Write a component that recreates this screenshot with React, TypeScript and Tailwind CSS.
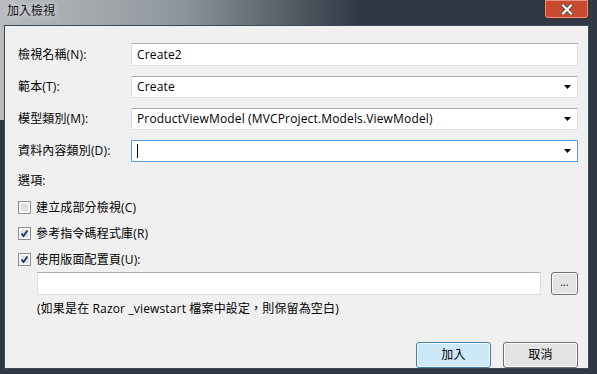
import React from 'react';

function Arrow() {
  return (
    <svg width="7" height="4" viewBox="0 0 7 4" className="absolute right-[6px] top-1/2 -translate-y-1/2">
      <path d="M0 0H7L3.5 4Z" fill="#000" />
    </svg>
  );
}

function Check({ checked }: { checked: boolean }) {
  return (
    <span className="relative w-[13px] h-[13px] border border-[#8e8f8f] bg-[#f4f4f4] shrink-0">
      <span className="absolute inset-[2px] bg-[#dcdee2]" />
      {checked && (
        <svg width="11" height="11" viewBox="0 0 11 11" className="absolute left-0 top-0">
          <path d="M2.5 5.5L4.5 8L8.5 2.5" stroke="#21346f" strokeWidth="1.8" fill="none" />
        </svg>
      )}
    </span>
  );
}

const field = 'relative h-[22px] bg-white border border-[#dbdfe6] border-t-[#abadb3] flex items-center pl-[5px] text-black';
const grayBtn = 'rounded-[3px] border border-[#707070] bg-[#e3e3e3] shadow-[inset_0_0_0_1px_#fcfcfc]';

export default function App() {
  return (
    <div className="w-[597px] h-[374px] relative overflow-hidden bg-[#2e3944] font-['Open_Sans','Noto_Sans_CJK_TC',sans-serif] text-[12px] leading-none tracking-[0.15px] text-black">
      {/* title bar: light glass fading into dark */}
      <div className="absolute left-0 top-0 h-[120px] w-[360px] bg-linear-to-r from-[#b8bcbf] via-[#8f969b] to-transparent" />

      <div className="absolute left-[7px] top-[4px] text-[12px] text-[#111] tracking-normal font-['Noto_Sans_CJK_TC',sans-serif] [text-shadow:0_0_6px_rgba(255,255,255,0.9)]">加入檢視</div>
      <div className="absolute left-[544px] top-0 w-[45px] h-[19px] rounded-b-[4px] border border-t-0 border-[#4a2a26] bg-[#c84a30] shadow-[inset_0_0_0_1px_rgba(255,220,210,0.5)] flex items-center justify-center">
        <svg width="12" height="11" viewBox="0 0 12 11">
          <path d="M2 1.5L10 9.5M10 1.5L2 9.5" stroke="#3c3c3c" strokeWidth="3.6" strokeLinecap="square" />
          <path d="M2 1.5L10 9.5M10 1.5L2 9.5" stroke="#fff" strokeWidth="2.2" strokeLinecap="square" />
        </svg>
      </div>

      {/* client */}
      <div className="absolute left-[4px] top-[25px] w-[585px] h-[344px] border border-[#3e4953] bg-[#f0f0f0] pl-[13px] pr-[10px] pt-[17px] flex flex-col">
        <div className="grid grid-cols-[113px_1fr] items-center gap-y-[10px]">
          <span>檢視名稱(N):</span>
          <div className={`${field} h-[23px]`}>Create2</div>
          <span>範本(T):</span>
          <div className={field}>
            Create
            <Arrow />
          </div>
          <span>模型類別(M):</span>
          <div className={field}>
            ProductViewModel (MVCProject.Models.ViewModel)
            <Arrow />
          </div>
          <span>資料內容類別(D):</span>
          <div className="relative h-[22px] bg-white border border-[#569de5] flex items-center pl-[5px]">
            <span className="w-px h-[14px] bg-black" />
            <Arrow />
          </div>
        </div>

        <div className="mt-[13px] h-[12px] flex items-center">選項:</div>

        <div className="mt-[14px] flex flex-col gap-[13px]">
          <label className="flex items-center gap-[5px] h-[13px]">
            <Check checked={false} />
            <span>建立成部分檢視(C)</span>
          </label>
          <label className="flex items-center gap-[5px] h-[13px]">
            <Check checked />
            <span>參考指令碼程式庫(R)</span>
          </label>
          <label className="flex items-center gap-[5px] h-[13px]">
            <Check checked />
            <span>使用版面配置頁(U):</span>
          </label>
        </div>

        <div className="mt-[6px] ml-[19px] flex items-center gap-[10px]">
          <div className="flex-1 h-[23px] bg-white border border-[#dbdfe6] border-t-[#abadb3]" />
          <button className={`w-[27px] h-[23px] ${grayBtn} text-[10px] leading-none pb-[3px]`}>...</button>
        </div>

        <div className="ml-[19px] mt-[8px] h-[12px] flex items-center">(如果是在 Razor _viewstart 檔案中設定，則保留為空白)</div>

        <div className="mt-[27px] flex justify-end gap-[12px]">
          <button className="w-[75px] h-[26px] rounded-[3px] border border-[#3c7fb1] bg-[#cde9f9] shadow-[inset_0_0_0_1px_#fcfcfc]">加入</button>
          <button className={`w-[75px] h-[26px] ${grayBtn}`}>取消</button>
        </div>
      </div>
    </div>
  );
}
